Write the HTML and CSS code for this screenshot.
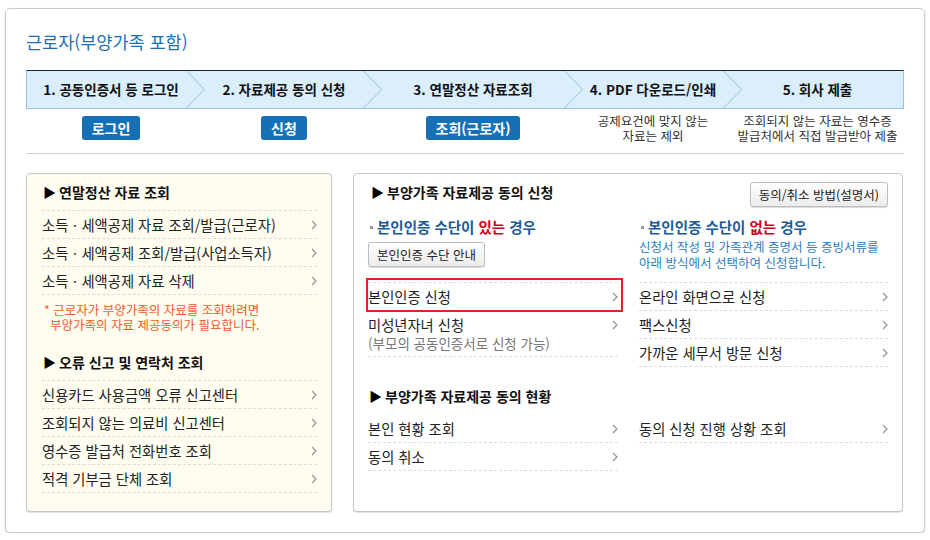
FILE: index.html
```html
<!DOCTYPE html>
<html lang="ko">
<head>
<meta charset="utf-8">
<title>근로자(부양가족 포함)</title>
<link rel="stylesheet" href="styles.css">
</head>
<body>
<div class="box">
  <h1 class="title">근로자(부양가족 포함)</h1>

  <div class="steps">
    <div class="step s1">1. 공동인증서 등 로그인</div>
    <svg class="chev" width="19" height="37" viewBox="0 0 19 37"><polyline points="0.5,0 18.5,18.5 0.5,37"/></svg>
    <div class="step s2">2. 자료제공 동의 신청</div>
    <svg class="chev" width="19" height="37" viewBox="0 0 19 37"><polyline points="0.5,0 18.5,18.5 0.5,37"/></svg>
    <div class="step s3">3. 연말정산 자료조회</div>
    <svg class="chev" width="19" height="37" viewBox="0 0 19 37"><polyline points="0.5,0 18.5,18.5 0.5,37"/></svg>
    <div class="step s4">4. PDF 다운로드/인쇄</div>
    <svg class="chev" width="19" height="37" viewBox="0 0 19 37"><polyline points="0.5,0 18.5,18.5 0.5,37"/></svg>
    <div class="step s5">5. 회사 제출</div>
  </div>

  <div class="actions">
    <div class="act s1"><a class="btn-blue">로그인</a></div>
    <div class="act s2"><a class="btn-blue">신청</a></div>
    <div class="act s3"><a class="btn-blue">조회(근로자)</a></div>
    <div class="act s4"><p class="desc">공제요건에 맞지 않는<br>자료는 제외</p></div>
    <div class="act s5"><p class="desc">조회되지 않는 자료는 영수증<br>발급처에서 직접 발급받아 제출</p></div>
  </div>

  <div class="divider"></div>

  <div class="panels">
    <section class="panel panel-left">
      <h2 class="ph"><span class="tri">▶</span>연말정산 자료 조회</h2>
      <ul class="list bordered">
        <li><span>소득ㆍ세액공제 자료 조회/발급(근로자)</span><svg class="arr" width="6" height="10" viewBox="0 0 6 10"><polyline points="1,1 5,5 1,9"/></svg></li>
        <li><span>소득ㆍ세액공제 조회/발급(사업소득자)</span><svg class="arr" width="6" height="10" viewBox="0 0 6 10"><polyline points="1,1 5,5 1,9"/></svg></li>
        <li><span>소득ㆍ세액공제 자료 삭제</span><svg class="arr" width="6" height="10" viewBox="0 0 6 10"><polyline points="1,1 5,5 1,9"/></svg></li>
      </ul>
      <p class="note">* 근로자가 부양가족의 자료를 조회하려면<br>부양가족의 자료 제공동의가 필요합니다.</p>

      <h2 class="ph second"><span class="tri">▶</span>오류 신고 및 연락처 조회</h2>
      <ul class="list bordered">
        <li><span>신용카드 사용금액 오류 신고센터</span><svg class="arr" width="6" height="10" viewBox="0 0 6 10"><polyline points="1,1 5,5 1,9"/></svg></li>
        <li><span>조회되지 않는 의료비 신고센터</span><svg class="arr" width="6" height="10" viewBox="0 0 6 10"><polyline points="1,1 5,5 1,9"/></svg></li>
        <li><span>영수증 발급처 전화번호 조회</span><svg class="arr" width="6" height="10" viewBox="0 0 6 10"><polyline points="1,1 5,5 1,9"/></svg></li>
        <li><span>적격 기부금 단체 조회</span><svg class="arr" width="6" height="10" viewBox="0 0 6 10"><polyline points="1,1 5,5 1,9"/></svg></li>
      </ul>
    </section>

    <section class="panel panel-right">
      <div class="ph-row">
        <h2 class="ph"><span class="tri">▶</span>부양가족 자료제공 동의 신청</h2>
        <a class="btn-gray">동의/취소 방법(설명서)</a>
      </div>

      <div class="cols apply">
        <div class="col">
          <div class="sub"><span class="sq"></span>본인인증 수단이&nbsp;<span class="red">있는</span>&nbsp;경우</div>
          <div class="intro intro-l"><a class="btn-gray">본인인증 수단 안내</a></div>
          <ul class="list bordered">
            <li class="hl"><span>본인인증 신청</span><svg class="arr" width="6" height="10" viewBox="0 0 6 10"><polyline points="1,1 5,5 1,9"/></svg></li>
            <li class="two"><span>미성년자녀 신청<br><span class="gray">(부모의 공동인증서로 신청 가능)</span></span><svg class="arr" width="6" height="10" viewBox="0 0 6 10"><polyline points="1,1 5,5 1,9"/></svg></li>
          </ul>
        </div>
        <div class="col">
          <div class="sub"><span class="sq"></span>본인인증 수단이&nbsp;<span class="red">없는</span>&nbsp;경우</div>
          <div class="intro intro-r">신청서 작성 및 가족관계 증명서 등 증빙서류를<br>아래 방식에서 선택하여 신청합니다.</div>
          <ul class="list bordered">
            <li><span>온라인 화면으로 신청</span><svg class="arr" width="6" height="10" viewBox="0 0 6 10"><polyline points="1,1 5,5 1,9"/></svg></li>
            <li><span>팩스신청</span><svg class="arr" width="6" height="10" viewBox="0 0 6 10"><polyline points="1,1 5,5 1,9"/></svg></li>
            <li><span>가까운 세무서 방문 신청</span><svg class="arr" width="6" height="10" viewBox="0 0 6 10"><polyline points="1,1 5,5 1,9"/></svg></li>
          </ul>
        </div>
      </div>

      <h2 class="ph status-h"><span class="tri">▶</span>부양가족 자료제공 동의 현황</h2>
      <div class="cols status">
        <ul class="list">
          <li><span>본인 현황 조회</span><svg class="arr" width="6" height="10" viewBox="0 0 6 10"><polyline points="1,1 5,5 1,9"/></svg></li>
          <li><span>동의 취소</span><svg class="arr" width="6" height="10" viewBox="0 0 6 10"><polyline points="1,1 5,5 1,9"/></svg></li>
        </ul>
        <ul class="list">
          <li><span>동의 신청 진행 상황 조회</span><svg class="arr" width="6" height="10" viewBox="0 0 6 10"><polyline points="1,1 5,5 1,9"/></svg></li>
        </ul>
      </div>
    </section>
  </div>
</div>
</body>
</html>
```

FILE: styles.css
```css
* { box-sizing: border-box; }
html, body { margin: 0; padding: 0; background: #fff; }
body {
  font-family: "Noto Sans CJK KR", "Noto Sans", sans-serif;
  font-size: 13px;
  color: #222;
}

.box {
  margin: 8px 5px 0;
  width: 920px;
  height: 525px;
  border: 1px solid #c9c9c9;
  border-radius: 5px;
  box-shadow: 0 1px 2px rgba(0, 0, 0, 0.18);
  padding: 21px 20px 0;
}

.title {
  margin: 0;
  font-size: 17.5px;
  line-height: 24px;
  font-weight: normal;
  color: #1f6fb3;
}

.steps, .actions {
  display: grid;
  grid-template-columns: 159px 19px 158px 19px 182px 19px 140px 19px 161px;
}

.steps {
  margin-top: 16px;
  height: 39px;
  background: #dbeefb;
  border: 1px solid #9cc2e0;
  border-top-color: #222;
}

.step {
  display: flex;
  align-items: center;
  justify-content: center;
  font-weight: bold;
  font-size: 13.5px;
  color: #111;
  white-space: nowrap;
  line-height: 37px;
}

.chev polyline {
  fill: none;
  stroke: #9dbfdc;
  stroke-width: 1;
}

.s1 { padding-left: 9px; }
.s5 { padding-right: 10px; }

.actions {
  margin-top: 2px;
  height: 34px;
  padding: 0 1px;
}
.act {
  display: flex;
  align-items: center;
  justify-content: center;
  white-space: nowrap;
}
.s1.act { grid-column: 1; }
.s2.act { grid-column: 3; }
.s3.act { grid-column: 5; }
.s4.act { grid-column: 7; }
.s5.act { grid-column: 9; }

.btn-blue {
  display: inline-block;
  height: 24px;
  line-height: 24px;
  padding: 0 10px;
  background: #1670b6;
  color: #fff;
  font-weight: bold;
  font-size: 14px;
  border-radius: 3px;
}

.desc {
  margin: 0;
  font-size: 12.5px;
  line-height: 15px;
  text-align: center;
  color: #333;
}

.divider {
  margin-top: 8px;
  border-top: 1px solid #cfcfcf;
}

.panels {
  margin-top: 19px;
  height: 339px;
  display: flex;
  gap: 21px;
}

.panel {
  border: 1px solid #c6c6c6;
  border-radius: 4px;
  box-shadow: 0 1px 1px rgba(0, 0, 0, 0.12);
}
.panel-left {
  width: 306px;
  background: #fefdf0;
  padding: 8px 14px 0 15px;
}
.panel-right {
  width: 550px;
  background: #fff;
  padding: 8px 14px 0 14px;
}

.ph {
  display: flex;
  align-items: center;
  height: 20px;
  margin: 0 0 8px;
  padding-left: 1px;
  font-size: 14px;
  font-weight: bold;
  line-height: 20px;
  color: #111;
  white-space: nowrap;
}
.ph .tri {
  color: #000;
  font-size: 13px;
  margin-right: 3px;
}
.ph.second { margin-top: 20px; }

.list {
  list-style: none;
  margin: 0;
  padding: 0;
}
.list.bordered { border-top: 1px dashed #dcdcdc; }
.list li {
  display: flex;
  justify-content: space-between;
  align-items: center;
  height: 28px;
  font-size: 14.3px;
  line-height: 27px;
  border-bottom: 1px dashed #dcdcdc;
  color: #222;
  white-space: nowrap;
}
.arr { flex: none; }
.arr polyline {
  fill: none;
  stroke: #999;
  stroke-width: 1.3;
}

.note {
  height: 30px;
  margin: 7px 0 0;
  padding-left: 8px;
  text-indent: -6px;
  font-size: 12.5px;
  line-height: 15px;
  color: #f05a28;
  white-space: nowrap;
}

.ph-row {
  display: flex;
  justify-content: space-between;
  align-items: flex-start;
}
.ph-row .ph { padding-left: 3px; margin: 0; }

.btn-gray {
  display: inline-block;
  height: 25px;
  line-height: 23px;
  padding: 0 8px;
  border: 1px solid #bdbdbd;
  border-radius: 3px;
  background: linear-gradient(#ffffff, #ececec);
  box-shadow: 0 1px 1px rgba(0, 0, 0, 0.15);
  font-size: 12.5px;
  color: #222;
  white-space: nowrap;
}

.cols {
  display: grid;
  grid-template-columns: 250px 249px;
  column-gap: 21px;
}
.apply { margin-top: 10px; }

.sub {
  display: flex;
  align-items: center;
  height: 20px;
  font-size: 14.5px;
  font-weight: bold;
  line-height: 20px;
  color: #1a5b97;
  white-space: nowrap;
}
.sub .sq {
  width: 3px;
  height: 3px;
  background: #999;
  margin: 0 4px 0 2px;
}
.red { color: #d0021b; }

.intro { height: 45px; }
.intro-l { padding-top: 5px; }
.intro-r {
  padding-top: 2px;
  font-size: 12.5px;
  line-height: 16px;
  color: #2d7dc0;
  white-space: nowrap;
}

.hl { position: relative; }
.hl::after {
  content: "";
  position: absolute;
  top: -5px;
  bottom: -2px;
  left: -2px;
  right: -5px;
  border: 2px solid #e3222b;
  pointer-events: none;
}

.list li.two {
  height: 46px;
  align-items: flex-start;
  line-height: 18px;
  padding: 5px 0 4px;
}
.list li.two .arr { margin-top: 4px; }
.gray { color: #777; font-size: 13.5px; }

.ph.status-h { margin: 19px 0 9px; padding-left: 1px; }
```
